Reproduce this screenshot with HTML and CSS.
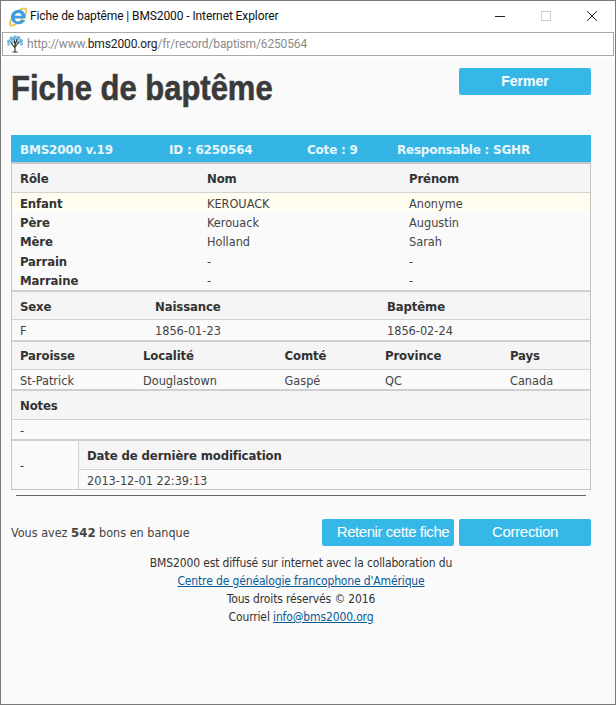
FILE: index.html
```html
<!DOCTYPE html>
<html lang="fr">
<head>
<meta charset="utf-8">
<title>Fiche de baptême | BMS2000</title>
<link rel="stylesheet" href="styles.css">
</head>
<body>
<div class="window">
  <header class="titlebar">
    <svg class="ie-icon" width="20" height="20" viewBox="0 0 20 20">
      <path d="M3.500 12C1 16.500 1.500 19 4.500 18.500 8 17.900 13.500 14 16.500 9 18.800 5 19 2 16.500 1.500 15 1.200 13 2 11 3.200" fill="none" stroke="#edc44e" stroke-width="1.800"/>
      <path d="M10.500 2.800c-4 0-7.300 3.100-7.500 7.200-.2 3.900 3.100 7.200 7.400 7.200 3.200 0 5.800-1.700 6.900-4.300h-4.100c-.7 1-1.700 1.500-2.900 1.500-1.900 0-3.300-1.200-3.400-3h10.700c.1-.5.100-1 .1-1.400 0-4-3.100-7.200-7.100-7.200zM6.900 8.800c.2-1.700 1.700-2.900 3.400-2.900 1.800 0 3.100 1.200 3.300 2.900z" fill="#3f9fe0"/>
    </svg>
    <span class="window-title">Fiche de baptême | BMS2000 - Internet Explorer</span>
    <div class="window-controls">
      <svg width="12" height="12" viewBox="0 0 12 12"><path d="M1 6.500h10" stroke="#222" stroke-width="1"/></svg>
      <svg width="12" height="12" viewBox="0 0 12 12"><rect x="1.500" y="1.500" width="9" height="9" fill="none" stroke="#ccc"/></svg>
      <svg width="12" height="12" viewBox="0 0 12 12"><path d="M1 1l10 10M11 1L1 11" stroke="#222" stroke-width="1"/></svg>
    </div>
  </header>
  <div class="addressbar">
    <svg class="favicon" width="18" height="18" viewBox="0 0 18 18">
      <g fill="#6db9dd">
        <circle cx="3" cy="6.500" r="2"/><circle cx="5.500" cy="3.500" r="2"/><circle cx="9" cy="2.500" r="2"/>
        <circle cx="12.500" cy="3" r="2"/><circle cx="15" cy="6" r="2"/><circle cx="15.500" cy="9" r="1.500"/>
        <circle cx="6" cy="7" r="1.800"/><circle cx="12" cy="7" r="1.800"/><circle cx="2.500" cy="9.500" r="1.300"/>
      </g>
      <path d="M9 17V9M9 13L5 8M9 12l4-5M9 9L8 4M9 10l2-6" stroke="#2b2b2b" stroke-width="1.100" fill="none"/>
      <path d="M6.500 17h5" stroke="#2b2b2b" stroke-width="1"/>
    </svg>
    <span class="url">http://www.<span class="url-domain">bms2000.org</span>/fr/record/baptism/6250564</span>
  </div>
  <main class="page">
    <div class="page-head">
      <h1>Fiche de baptême</h1>
      <a class="btn btn-strong">Fermer</a>
    </div>
    <div class="record">
      <div class="record-bar">
        <span class="bar-a">BMS2000 v.19</span>
        <span class="bar-b">ID : 6250564</span>
        <span class="bar-c">Cote : 9</span>
        <span>Responsable : SGHR</span>
      </div>
      <section class="block">
        <div class="row head tall cols-people"><b>Rôle</b><b>Nom</b><b>Prénom</b></div>
        <div class="row-list">
          <div class="row item cols-people highlight"><b>Enfant</b><span>KEROUACK</span><span>Anonyme</span></div>
          <div class="row item cols-people"><b>Père</b><span>Kerouack</span><span>Augustin</span></div>
          <div class="row item cols-people"><b>Mère</b><span>Holland</span><span>Sarah</span></div>
          <div class="row item cols-people"><b>Parrain</b><span>-</span><span>-</span></div>
          <div class="row item cols-people"><b>Marraine</b><span>-</span><span>-</span></div>
        </div>
      </section>
      <section class="block">
        <div class="row head cols-dates"><b>Sexe</b><b>Naissance</b><b>Baptême</b></div>
        <div class="row value tall-value cols-dates"><span>F</span><span>1856-01-23</span><span>1856-02-24</span></div>
      </section>
      <section class="block">
        <div class="row head cols-place"><b>Paroisse</b><b>Localité</b><b>Comté</b><b>Province</b><b>Pays</b></div>
        <div class="row value cols-place"><span>St-Patrick</span><span>Douglastown</span><span>Gaspé</span><span>QC</span><span>Canada</span></div>
      </section>
      <section class="block">
        <div class="row head tall"><b>Notes</b></div>
        <div class="row value"><span>-</span></div>
      </section>
      <section class="block modified">
        <div class="modified-side">-</div>
        <div class="modified-main">
          <div class="row head tall"><b>Date de dernière modification</b></div>
          <div class="row value"><span>2013-12-01 22:39:13</span></div>
        </div>
      </section>
    </div>
    <hr class="rule">
    <div class="actions">
      <p class="balance">Vous avez <b>542</b> bons en banque</p>
      <div class="action-buttons">
        <a class="btn btn-offset">Retenir cette fiche</a>
        <a class="btn">Correction</a>
      </div>
    </div>
    <footer class="credits">
      <p>BMS2000 est diffusé sur internet avec la collaboration du</p>
      <p><a href="#">Centre de généalogie francophone d'Amérique</a></p>
      <p>Tous droits réservés © 2016</p>
      <p>Courriel <a href="#">info@bms2000.org</a></p>
    </footer>
  </main>
</div>
</body>
</html>
```
FILE: styles.css
```css
* { box-sizing: border-box; }
html, body { margin: 0; height: 100%; }
body { font-family: "DejaVu Sans", sans-serif; font-stretch: condensed; color: #333; overflow: hidden; }
.window { width: 616px; height: 705px; display: flex; flex-direction: column; border: 1px solid #7a7a7a; background: #fff; }
.titlebar { height: 30px; flex: none; display: flex; align-items: center; padding-left: 7px; }
.ie-icon { margin-right: 2px; flex: none; margin-top: 1px; }
.window-title { font: 12px/16px Roboto, sans-serif; color: #111; white-space: nowrap; letter-spacing: -.1px; }
.window-controls { margin-left: auto; display: flex; gap: 34px; padding-right: 17px; }
.addressbar { height: 24px; flex: none; margin: 1px 0 0 1px; width: 612px; border: 1px solid #a9a9a9; display: flex; align-items: center; padding-left: 3px; gap: 3px; }
.url { font: 12px/16px Roboto, sans-serif; color: #8a8a8a; white-space: nowrap; letter-spacing: -.13px; }
.url-domain { color: #222; }
.page { flex: 1; margin-top: 4px; background: #fafafa; padding: 0 24px 0 10px; }
.page-head { display: flex; justify-content: space-between; height: 75px; padding-top: 8px; }
h1 { margin: 0; font: bold 35px/40px "Liberation Sans", sans-serif; font-stretch: normal; color: #3a3a3a; white-space: nowrap; transform: scaleX(.885); transform-origin: left center; -webkit-text-stroke: .6px #3a3a3a; width: 304px; flex: none; }
.btn { display: block; width: 132px; height: 27px; border-radius: 2px; background: #35b8e8; color: #fff; text-align: center; font: 15px/26px "Liberation Sans", sans-serif; font-stretch: normal; letter-spacing: -.3px; }
.btn-strong { font-weight: bold; font-size: 14px; letter-spacing: 0; }
.btn-offset { padding-left: 10px; letter-spacing: -.45px; }
.record { width: 580px; border: 1px solid #c4c4c4; border-top: 0; font-size: 12px; }
.record-bar { height: 29px; background: #35b5e5; color: #e6f7fd; font-size: 12px; font-weight: bold; font-stretch: normal; line-height: 31px; letter-spacing: -.22px; padding-left: 9px; display: flex; border-bottom: 2px solid #c9c9c9; margin: 0 -1px; }
.bar-a { width: 149px; }
.bar-b { width: 138px; }
.bar-c { width: 90px; }
.block { border-bottom: 2px solid #cfcfcf; }
.block:last-child { border-bottom: 0; }
.row { padding-left: 8px; display: grid; align-items: center; white-space: nowrap; }
.row b { font-weight: bold; font-size: 13px; letter-spacing: -.12px; }
.row span { color: #444; font-size: 12.600px; }
.head { height: 28px; padding-top: 1px; background: #f5f5f5; border-bottom: 1px solid #d2d2d2; }
.head.cols-dates { padding-top: 2px; }
.tall { height: 29px; }
.value { height: 19px; padding-top: 2px; }
.tall-value { height: 20px; }
.item { height: 19.400px; padding-top: 1px; }
.highlight { background: #fffdf0; padding-top: 2px; }
.cols-people { grid-template-columns: 187px 202px 1fr; }
.cols-dates { grid-template-columns: 135px 232px 1fr; }
.cols-place { grid-template-columns: 123px 141.500px 100.500px 125px 1fr; }
.modified { display: flex; }
.modified-side { width: 67px; border-right: 1px solid #cfcfcf; padding-left: 8px; display: flex; align-items: center; flex: none; padding-top: 2px; }
.modified-main { flex: 1; }
.rule { margin: 5px 0 0 5px; width: 570px; height: 1px; border: 0; background: #666; }
.actions { display: flex; justify-content: space-between; align-items: center; margin-top: 23px; width: 580px; }
.balance { margin: 0; font-size: 12.500px; color: #444; }
.balance b { font-size: 13px; }
.action-buttons { display: flex; gap: 5px; }
.credits { width: 580px; margin-top: 8px; text-align: center; font-size: 12px; line-height: 18px; color: #333; letter-spacing: -.14px; }
.credits p { margin: 0; }
.credits a { color: #0a5a96; }
```
